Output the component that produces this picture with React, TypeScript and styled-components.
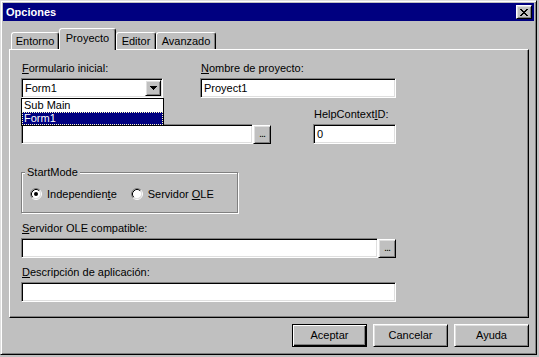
import React from "react";
import styled, { createGlobalStyle, css } from "styled-components";

const GlobalStyle = createGlobalStyle`
  html, body {
    margin: 0;
    padding: 0;
    background: #c0c0c0;
  }
  body {
    font-family: "Liberation Sans", Arial, sans-serif;
    font-size: 11px;
    color: #000;
  }
`;

const raised = css`
  border: 1px solid;
  border-color: #fff #000 #000 #fff;
  box-shadow: inset 1px 1px 0 #dfdfdf, inset -1px -1px 0 #808080;
`;

const sunken = css`
  border: 1px solid;
  border-color: #808080 #fff #fff #808080;
  box-shadow: inset 1px 1px 0 #000, inset -1px -1px 0 #dfdfdf;
`;

const Window = styled.div`
  box-sizing: border-box;
  width: 537px;
  height: 355px;
  padding: 2px;
  background: #c0c0c0;
  border: 1px solid;
  border-color: #dfdfdf #000 #000 #dfdfdf;
  box-shadow: inset 1px 1px 0 #fff, inset -1px -1px 0 #808080;
  display: flex;
  flex-direction: column;
`;

const TitleBar = styled.div`
  height: 18px;
  flex: none;
  display: flex;
  align-items: center;
  padding: 0 2px 0 3px;
  background: #000080;
  color: #fff;
  font-weight: bold;
`;

const CloseButton = styled.div`
  ${raised};
  box-sizing: border-box;
  width: 16px;
  height: 14px;
  margin-left: auto;
  background: #c0c0c0;
  display: flex;
  align-items: center;
  justify-content: center;
`;

const Body = styled.div`
  flex: 1;
  padding: 7px 5px 0 6px;
  display: flex;
  flex-direction: column;
`;

const TabRow = styled.div`
  display: flex;
  align-items: flex-end;
  height: 22px;
  margin: 0 0 -1px 2px;
`;

const Tab = styled.div<{ $w: number; $active?: boolean }>`
  box-sizing: border-box;
  width: ${(p) => p.$w}px;
  height: ${(p) => (p.$active ? 22 : 17)}px;
  margin-bottom: ${(p) => (p.$active ? 0 : 1)}px;
  padding-top: ${(p) => (p.$active ? 3 : 2)}px;
  border: 1px solid;
  border-bottom: none;
  border-color: #fff #000 transparent #fff;
  border-radius: 3px 3px 0 0;
  box-shadow: inset -1px 0 0 #808080;
  background: #c0c0c0;
  text-align: center;
  line-height: 13px;
  white-space: nowrap;
  position: relative;
  z-index: ${(p) => (p.$active ? 1 : 0)};
`;

const Panel = styled.div`
  box-sizing: border-box;
  height: 269px;
  flex: none;
  padding: 12px 11px 0 11px;
  border: 1px solid;
  border-color: #fff #000 #000 #fff;
  box-shadow: inset -1px -1px 0 #808080;
`;

const Row = styled.div<{ $mt?: number }>`
  display: flex;
  align-items: flex-start;
  margin-top: ${(p) => p.$mt ?? 0}px;
`;

const Field = styled.div<{ $w: number; $ml?: number; $top?: boolean }>`
  display: flex;
  flex-direction: column;
  width: ${(p) => p.$w}px;
  margin-left: ${(p) => p.$ml ?? 0}px;
  position: relative;
  z-index: ${(p) => (p.$top ? 2 : 0)};
`;

const Label = styled.div`
  height: 13px;
  line-height: 13px;
  margin-bottom: 3px;
  padding-left: 1px;
  white-space: nowrap;
`;

const InputLine = styled.div`
  display: flex;
  align-items: center;
`;

const TextBox = styled.div`
  ${sunken};
  box-sizing: border-box;
  flex: 1 1 auto;
  min-width: 0;
  height: 20px;
  padding: 1px 3px 0;
  line-height: 17px;
  background: #fff;
  white-space: nowrap;
  overflow: hidden;
`;

const EllipsisButton = styled.div`
  ${raised};
  box-sizing: border-box;
  width: 18px;
  height: 19px;
  flex: none;
  background: #c0c0c0;
  text-align: center;
  line-height: 15px;
  letter-spacing: -1px;
`;

const Combo = styled.div`
  ${sunken};
  box-sizing: border-box;
  display: flex;
  height: 20px;
  padding: 1px;
  background: #fff;
`;

const ComboText = styled.div`
  flex: 1;
  padding: 1px 2px 0;
  line-height: 15px;
`;

const ArrowButton = styled.div`
  ${raised};
  box-sizing: border-box;
  width: 16px;
  height: 16px;
  background: #c0c0c0;
  display: flex;
  align-items: center;
  justify-content: center;
`;

const DropList = styled.div`
  position: absolute;
  top: 36px;
  left: 0;
  width: 143px;
  box-sizing: border-box;
  border: 1px solid #000;
  background: #fff;
`;

const ListItem = styled.div<{ $selected?: boolean }>`
  height: 13px;
  line-height: 13px;
  padding-left: 2px;
  background: ${(p) => (p.$selected ? "#000080" : "#fff")};
  color: ${(p) => (p.$selected ? "#fff" : "#000")};
  outline: ${(p) => (p.$selected ? "1px dotted #ffffc0" : "none")};
  outline-offset: -1px;
`;

const Group = styled.div`
  position: relative;
  width: 217px;
  box-sizing: border-box;
  margin-top: 28px;
  padding: 14px 8px 12px;
  border: 1px solid #808080;
  box-shadow: inset 1px 1px 0 #fff, 1px 1px 0 #fff;
`;

const Caption = styled.span`
  position: absolute;
  top: -7px;
  left: 3px;
  padding: 0 2px;
  line-height: 13px;
  background: #c0c0c0;
`;

const RadioRow = styled.div`
  display: flex;
  align-items: center;
  gap: 14px;
  height: 13px;
`;

const RadioItem = styled.div`
  display: flex;
  align-items: center;
  gap: 5px;
  white-space: nowrap;
`;

const ButtonRow = styled.div`
  display: flex;
  justify-content: flex-end;
  gap: 6px;
  margin-top: 6px;
`;

const Button = styled.div<{ $default?: boolean }>`
  box-sizing: border-box;
  width: 75px;
  height: 23px;
  line-height: 21px;
  text-align: center;
  background: #c0c0c0;
  border: 1px solid;
  ${(p) =>
    p.$default
      ? css`
          border-color: #000;
          box-shadow: inset 1px 1px 0 #fff, inset -1px -1px 0 #000,
            inset -2px -2px 0 #808080;
        `
      : css`
          border-color: #fff #000 #000 #fff;
          box-shadow: inset 1px 1px 0 #dfdfdf, inset -1px -1px 0 #808080;
        `}
`;

const CloseGlyph = () => (
  <svg width="8" height="7" viewBox="0 0 8 7" shapeRendering="crispEdges">
    <g fill="#000">
      <rect x="0" y="0" width="2" height="1" />
      <rect x="6" y="0" width="2" height="1" />
      <rect x="1" y="1" width="2" height="1" />
      <rect x="5" y="1" width="2" height="1" />
      <rect x="2" y="2" width="4" height="1" />
      <rect x="3" y="3" width="2" height="1" />
      <rect x="2" y="4" width="4" height="1" />
      <rect x="1" y="5" width="2" height="1" />
      <rect x="5" y="5" width="2" height="1" />
      <rect x="0" y="6" width="2" height="1" />
      <rect x="6" y="6" width="2" height="1" />
    </g>
  </svg>
);

const DownGlyph = () => (
  <svg width="7" height="4" viewBox="0 0 7 4" shapeRendering="crispEdges">
    <g fill="#000">
      <rect x="0" y="0" width="7" height="1" />
      <rect x="1" y="1" width="5" height="1" />
      <rect x="2" y="2" width="3" height="1" />
      <rect x="3" y="3" width="1" height="1" />
    </g>
  </svg>
);

const RadioDot = ({ checked }: { checked?: boolean }) => (
  <svg width="12" height="12" viewBox="0 0 12 12">
    <circle cx="6" cy="6" r="4.5" fill="#fff" />
    <path d="M2.11 9.89 A5.5 5.5 0 0 1 9.89 2.11" fill="none" stroke="#808080" />
    <path d="M9.89 2.11 A5.5 5.5 0 0 1 2.11 9.89" fill="none" stroke="#fff" />
    <path d="M2.82 9.18 A4.5 4.5 0 0 1 9.18 2.82" fill="none" stroke="#000" />
    <path d="M9.18 2.82 A4.5 4.5 0 0 1 2.82 9.18" fill="none" stroke="#dfdfdf" />
    {checked && <circle cx="6" cy="6" r="2" fill="#000" />}
  </svg>
);

const tabs = [
  { name: "Entorno", w: 48 },
  { name: "Proyecto", w: 57, active: true },
  { name: "Editor", w: 40 },
  { name: "Avanzado", w: 60 },
];

export default function App() {
  return (
    <>
      <GlobalStyle />
      <Window>
        <TitleBar>
          Opciones
          <CloseButton>
            <CloseGlyph />
          </CloseButton>
        </TitleBar>
        <Body>
          <TabRow>
            {tabs.map((t) => (
              <Tab key={t.name} $w={t.w} $active={t.active}>
                {t.name}
              </Tab>
            ))}
          </TabRow>
          <Panel>
            <Row>
              <Field $w={142} $top>
                <Label>
                  <u>F</u>ormulario inicial:
                </Label>
                <Combo>
                  <ComboText>Form1</ComboText>
                  <ArrowButton>
                    <DownGlyph />
                  </ArrowButton>
                </Combo>
                <DropList>
                  <ListItem>Sub Main</ListItem>
                  <ListItem $selected>Form1</ListItem>
                </DropList>
              </Field>
              <Field $w={196} $ml={37}>
                <Label>
                  <u>N</u>ombre de proyecto:
                </Label>
                <TextBox>Proyect1</TextBox>
              </Field>
            </Row>

            <Row $mt={10}>
              <Field $w={250}>
                <Label />
                <InputLine>
                  <TextBox />
                  <EllipsisButton>...</EllipsisButton>
                </InputLine>
              </Field>
              <Field $w={83} $ml={42}>
                <Label>
                  HelpContext<u>I</u>D:
                </Label>
                <TextBox>0</TextBox>
              </Field>
            </Row>

            <Group>
              <Caption>StartMode</Caption>
              <RadioRow>
                <RadioItem>
                  <RadioDot checked />
                  <span>
                    Independien<u>t</u>e
                  </span>
                </RadioItem>
                <RadioItem>
                  <RadioDot />
                  <span>
                    Servidor <u>O</u>LE
                  </span>
                </RadioItem>
              </RadioRow>
            </Group>

            <Row $mt={9}>
              <Field $w={375}>
                <Label>
                  <u>S</u>ervidor OLE compatible:
                </Label>
                <InputLine>
                  <TextBox />
                  <EllipsisButton>...</EllipsisButton>
                </InputLine>
              </Field>
            </Row>

            <Row $mt={8}>
              <Field $w={375}>
                <Label>
                  <u>D</u>escripción de aplicación:
                </Label>
                <TextBox />
              </Field>
            </Row>
          </Panel>
          <ButtonRow>
            <Button $default>Aceptar</Button>
            <Button>Cancelar</Button>
            <Button>Ayuda</Button>
          </ButtonRow>
        </Body>
      </Window>
    </>
  );
}
